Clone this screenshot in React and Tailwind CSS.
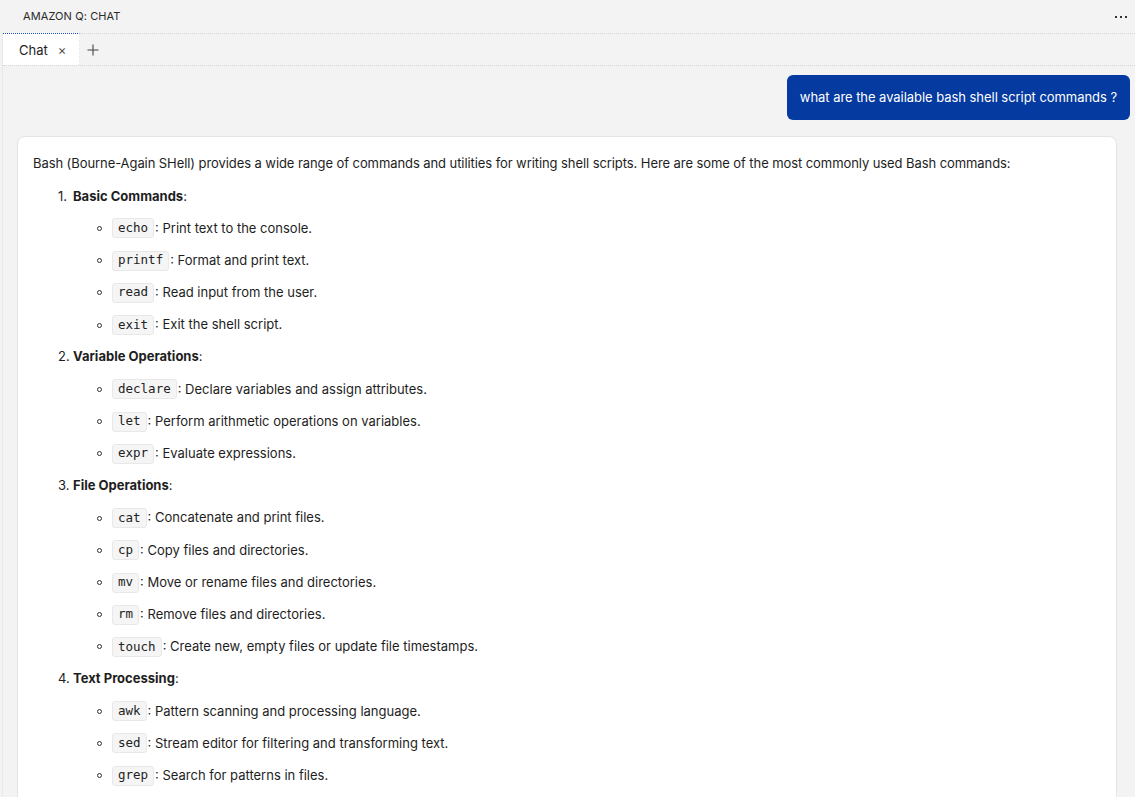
import React from "react";

const sections = [
	{
		title: "Basic Commands",
		items: [
			["echo", "Print text to the console."],
			["printf", "Format and print text."],
			["read", "Read input from the user."],
			["exit", "Exit the shell script."],
		],
	},
	{
		title: "Variable Operations",
		items: [
			["declare", "Declare variables and assign attributes."],
			["let", "Perform arithmetic operations on variables."],
			["expr", "Evaluate expressions."],
		],
	},
	{
		title: "File Operations",
		items: [
			["cat", "Concatenate and print files."],
			["cp", "Copy files and directories."],
			["mv", "Move or rename files and directories."],
			["rm", "Remove files and directories."],
			["touch", "Create new, empty files or update file timestamps."],
		],
	},
	{
		title: "Text Processing",
		items: [
			["awk", "Pattern scanning and processing language."],
			["sed", "Stream editor for filtering and transforming text."],
			["grep", "Search for patterns in files."],
		],
	},
];

function App() {
	return (
		<div className="h-[797px] w-full overflow-hidden bg-[#f3f3f3] text-[#1e1e1e] font-['Inter','Liberation_Sans',sans-serif]">
			{/* Panel header */}
			<div className="h-[33px] flex items-center justify-between pl-[23px] pr-[8px]">
				<span className="text-[11px] tracking-[0.1px] text-[#2a2a2a]">AMAZON Q: CHAT</span>
				<div className="flex gap-[3px] items-center">
					<span className="w-[2px] h-[2px] bg-[#333]"></span>
					<span className="w-[2px] h-[2px] bg-[#333]"></span>
					<span className="w-[2px] h-[2px] bg-[#333]"></span>
				</div>
			</div>

			<div className="ml-[2px] border-l border-dotted border-[#dcdcdc] h-full">
				{/* Tabs */}
				<div className="h-[33px] flex border-t border-b border-dotted border-[#d6d6d6]">
					<div className="w-[77px] -mt-px bg-white border-t border-dotted border-t-[#1a4fc4] border-r border-r-[#e2e2e2] flex items-center pl-[16px] gap-[10px]">
						<span className="text-[13px] pt-[2px]">Chat</span>
						<span className="text-[13px] text-[#555] leading-none pt-[2px]">×</span>
					</div>
					<div className="flex items-center pl-[7px]">
						<svg width="12" height="12" viewBox="0 0 12 12" stroke="#444" strokeWidth="1.1">
							<path d="M6 0.5v11M0.5 6h11" />
						</svg>
					</div>
				</div>

				{/* Conversation */}
				<div className="pt-[9px] pl-[14px] pr-[5px]">
					<div className="flex justify-end">
						<div className="bg-[#053aa0] text-white text-[13px] rounded-[6px] h-[45px] flex items-center px-[13px] tracking-[-0.05px]">
							what are the available bash shell script commands ?
						</div>
					</div>

					<div className="mt-[16px] mr-[13px] bg-white border border-[#e4e4e4] rounded-[8px] pl-[15px] pt-[11px] pb-[40px] text-[13px]">
						<div className="h-[32.2px] flex items-center tracking-[-0.08px]">
							Bash (Bourne-Again SHell) provides a wide range of commands and utilities for writing shell scripts. Here are some of the most commonly used Bash commands:
						</div>
						{sections.map((s, i) => (
							<div key={s.title}>
								<div className="h-[32.2px] flex items-center pl-[25px]">
									<span className="w-[15px]">{i + 1}.</span>
									<span className="font-bold">{s.title}</span>:
								</div>
								{s.items.map(([cmd, desc]) => (
									<div key={cmd} className="h-[32.2px] flex items-center pl-[64px]">
										<span className="w-[5px] h-[5px] rounded-full border border-[#333] mr-[10px]"></span>
										<code className="bg-[#f5f5f5] border border-[#e8e8e8] rounded-[3px] px-[5px] h-[20px] flex items-center text-[12.5px] font-['DejaVu_Sans_Mono',monospace] text-[#222]">
											{cmd}
										</code>
										<span className="ml-[1px]">: {desc}</span>
									</div>
								))}
							</div>
						))}
					</div>
				</div>
			</div>
		</div>
	);
}

export default App;
